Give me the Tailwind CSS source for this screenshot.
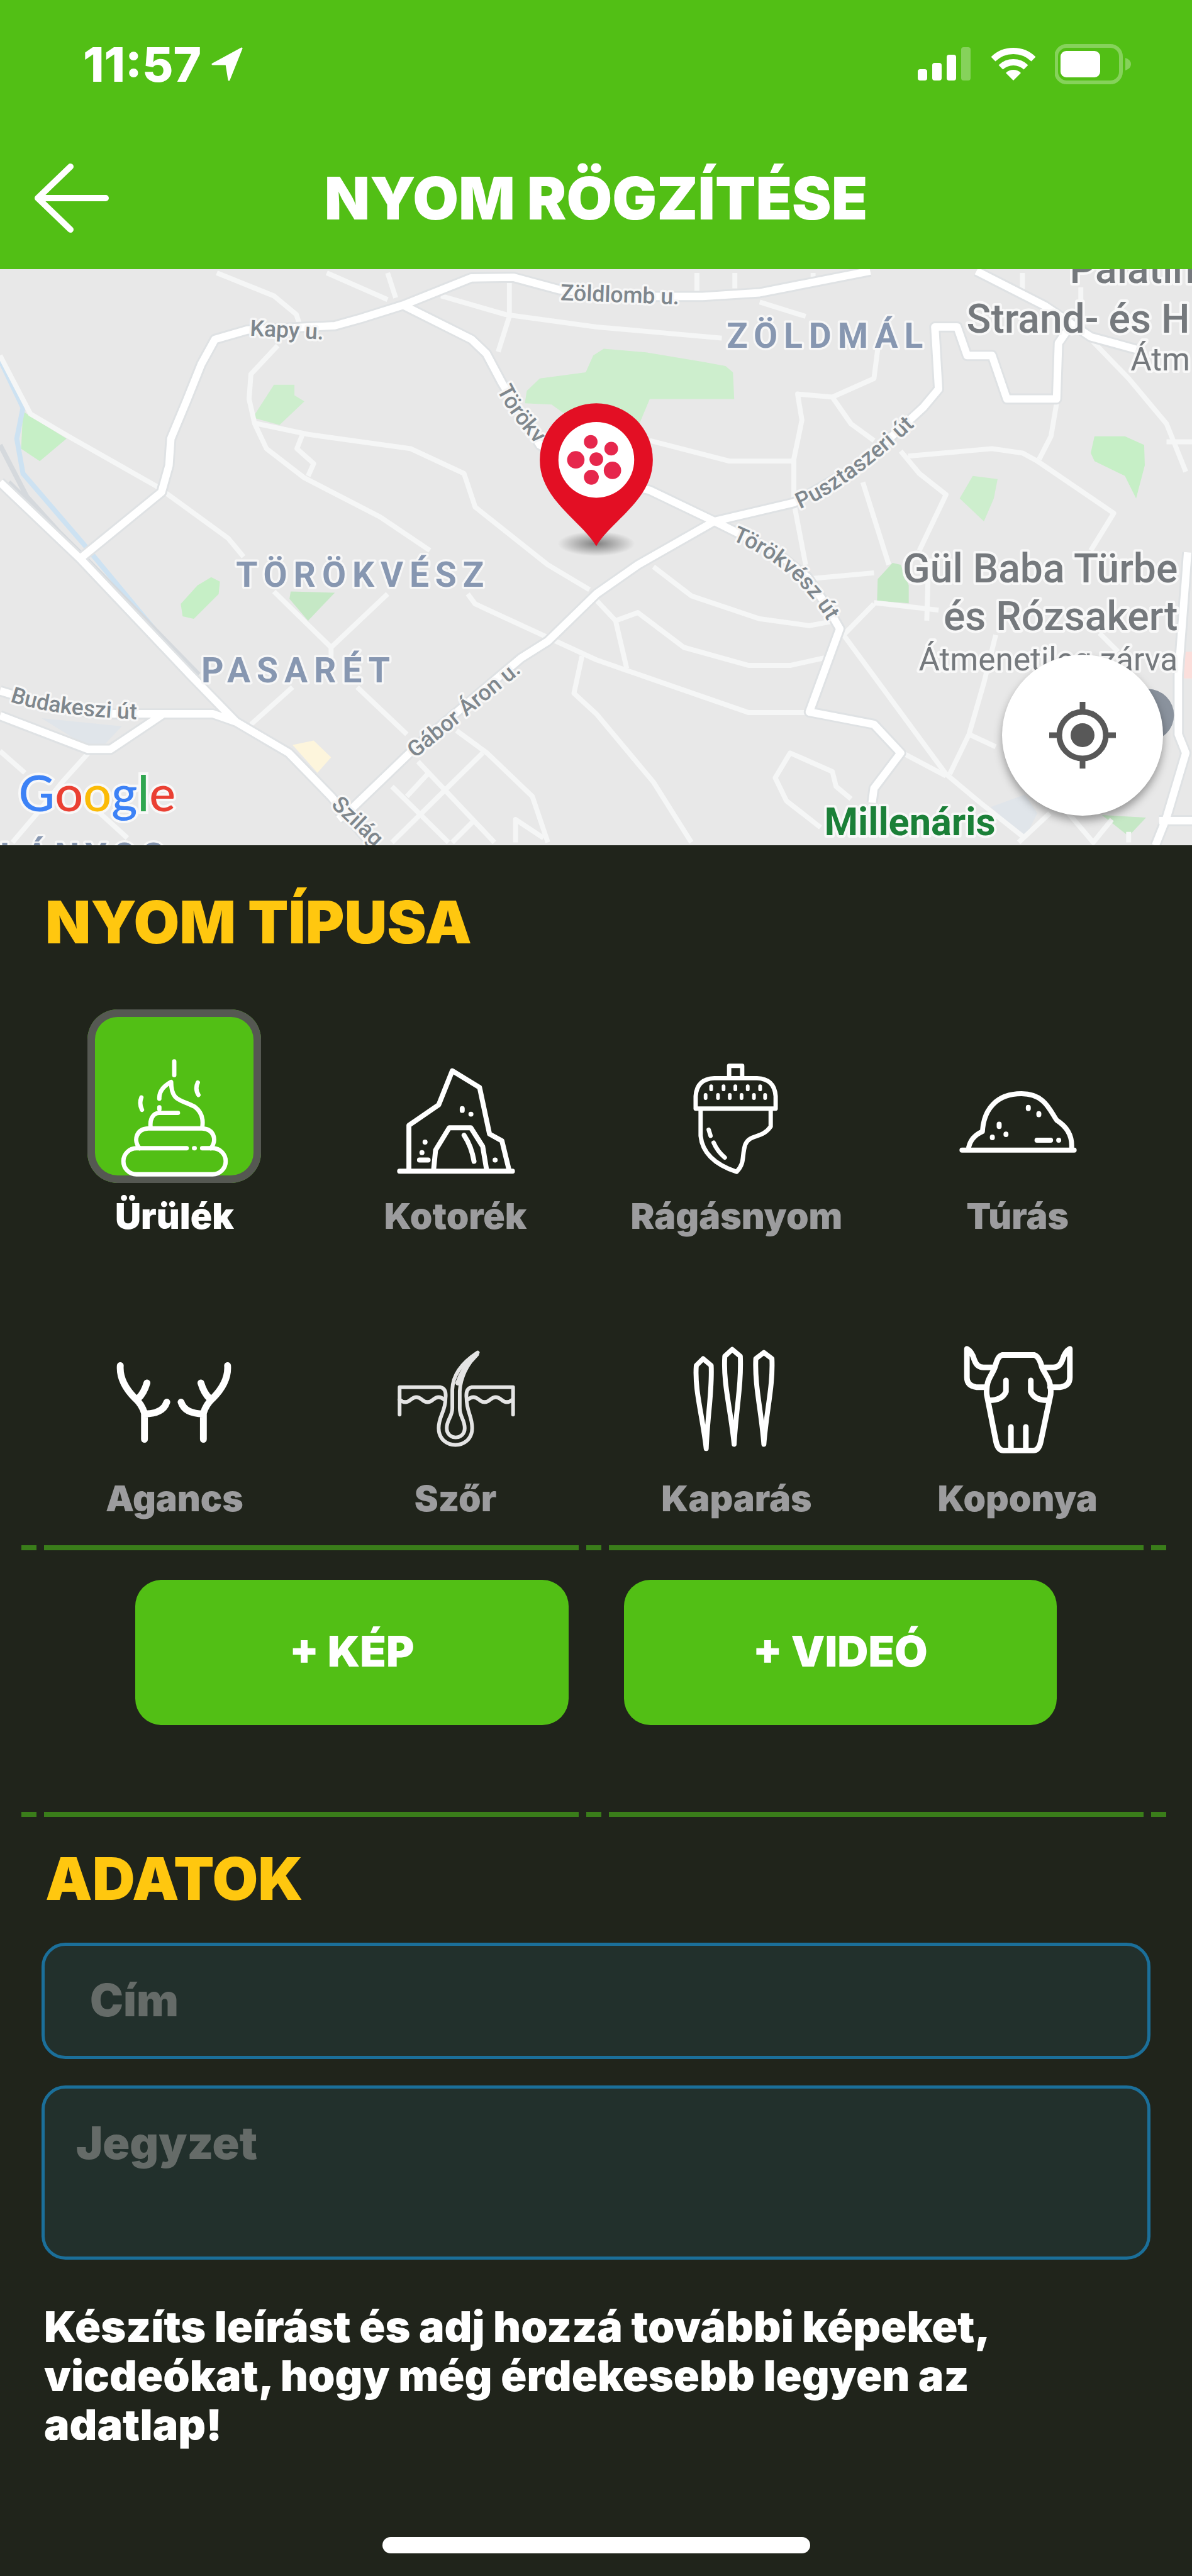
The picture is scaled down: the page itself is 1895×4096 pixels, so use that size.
<!DOCTYPE html>
<html lang="hu">
<head>
  <meta charset="UTF-8" />
  <meta name="viewport" content="width=device-width, initial-scale=1.0" />
  <title>Nyom rögzítése</title>
  <script src="https://cdn.jsdelivr.net/npm/@tailwindcss/browser@4"></script>
</head>
<body class="bg-[#20241b] min-h-screen font-['Inter',sans-serif] text-white">

  <header class="bg-[#52bf15] pt-[62px] pb-[53px]">
    <!-- status bar -->
    <div class="flex items-center justify-between h-20 pl-[132px] pr-[96px]">
      <div class="flex items-center gap-4">
        <span class="text-[76px] leading-20 font-extrabold">11:57</span>
        <svg class="w-[50px] h-[54px]" viewBox="0 0 50 54" fill="#fff" stroke="#fff" stroke-width="3" stroke-linejoin="round"><path d="M48 2 2 27h22l4 25z" /></svg>
      </div>
      <div class="flex items-center gap-[30px]">
        <svg class="w-[86px] h-[56px]" viewBox="0 0 86 56" fill="#fff">
          <rect x="0" y="36" width="15" height="18" rx="4" />
          <rect x="23" y="26" width="15" height="28" rx="4" />
          <rect x="46" y="13" width="15" height="41" rx="4" />
          <rect x="69" y="1" width="15" height="53" rx="4" opacity=".3" />
        </svg>
        <svg class="w-[72px] h-[54px]" viewBox="0 0 72 54" fill="none" stroke="#fff" stroke-width="10">
          <path d="M4 19a46 46 0 0 1 64 0" />
          <path d="M16 32a29 29 0 0 1 40 0" />
          <path d="M36 53 24 41a17 17 0 0 1 24 0z" fill="#fff" stroke="none" />
        </svg>
        <svg class="w-[122px] h-[64px]" viewBox="0 0 122 64">
          <rect x="2" y="3" width="103" height="58" rx="17" fill="none" stroke="#fff" stroke-opacity=".3" stroke-width="6" />
          <rect x="9" y="11" width="63" height="42" rx="9" fill="#fff" />
          <path d="M112 22q9 3 9 10t-9 10z" fill="#fff" fill-opacity=".3" />
        </svg>
      </div>
    </div>
    <!-- title bar -->
    <div class="mt-[113px] grid grid-cols-[180px_1fr_180px] items-center">
      <button type="button" aria-label="Vissza" class="pl-[54px]">
        <svg class="w-[122px] h-[110px]" viewBox="0 0 122 110" fill="none" stroke="#fff" stroke-width="10" stroke-linecap="round" stroke-linejoin="round"><path d="M58 5 6 55l52 50M6 55h108" /></svg>
      </button>
      <h1 class="text-center text-[94px] leading-[120px] font-black">NYOM RÖGZÍTÉSE</h1>
    </div>
  </header>

  <!-- map -->
  <section class="relative">
    <svg class="block w-full" viewBox="0 434 1919 928" font-family="Roboto, sans-serif">
      <defs>
        <path id="main-roads" d="M0 777L129 900 260 793 272 750 275 707 300 647 324 587 346 547 398 532 539 525 582 513 649 492 759 448 826 447 900 467 1000 478H1131L1223 472 1401 437M649 492L759 547 783 570 808 617 869 717 960 770 1046 790 1150 840 1250 890 1300 930 1330 975 1352 1013 1303 1147 1407 1167 1450 1213 1407 1270 1404 1293M1150 840L1278 810 1388 747 1486 657 1511 627 1505 527H1541L1557 573H1597L1621 643H1701L1704 553 1720 530M1572 437L1682 493 1756 543 1829 563M1150 840L1027 910 960 957 882 1033 839 1060 673 1200 569 1300 545 1320M129 900L306 1087 380 1163 465 1213 533 1283 610 1375M0 1113L90 1140 160 1150H343L380 1163M0 1153L141 1207H178L263 1150M1912 890L1897 1087V1183L1909 1213 1878 1317 1860 1362M1866 1322H1919" />
        <path id="p-budakeszi" d="M16 1130Q90 1156 260 1160" />
        <path id="p-torokvesz-1" d="M800 628Q830 690 900 750" />
        <path id="p-torokvesz-2" d="M1178 870C1250 900 1310 950 1345 1025" />
        <path id="p-pusztaszeri" d="M1288 820Q1380 780 1510 650" />
        <path id="p-gabor" d="M668 1222L880 1050" />
        <path id="p-szilagyi" d="M532 1298L640 1400" />
        <radialGradient id="pin-shadow">
          <stop offset="0" stop-color="#000" stop-opacity=".45" />
          <stop offset="1" stop-color="#000" stop-opacity="0" />
        </radialGradient>
      </defs>
      <rect y="434" width="1919" height="928" fill="#e8e8e8" />
      <g fill="#cdeecd">
        <path d="M972 562l68 6 91 15 37 7 12 10 2 43h-136l-25 60-115-38-18-13-43-2 3-20 21-20 74-10 12-27z" />
        <path d="M441 620h33v17l16 10-40 38-43-12z" />
        <path d="M37 663l70 44-43 36-30-20z" fill="#c6efc6" />
        <path d="M340 930l14 7-2 20-40 40-18-4-3-20 27-30z" fill="#c6efc6" />
        <path d="M468 953l71 2-43 45-30-35z" fill="#c5e8c5" />
        <path d="M1437 907l13 3 13 33v29l-51-4 1-35z" fill="#c5e8c5" />
        <path d="M1566 767l40 5-6 31-16 37-39-37z" />
        <path d="M1762 703h49l31 14 1 33-14 53-18-36-49-24-6-13z" fill="#c6efc6" />
        <path d="M1774 1313l71 4-28 30z" fill="#c5e8c5" />
      </g>
      <path d="M471 1200l34-7 28 27-22 25z" fill="#fdf5dc" />
      <path d="M67 1157l129 13-31 33h-24z" fill="#e0e5ea" />
      <path d="M1595 1300l55-20 20 30-20 40z" fill="#e0e5ea" />
      <rect x="1903" y="1050" width="16" height="43" fill="#fbdedb" />
      <path d="M0 580L37 657 27 707 37 763 135 877 251 1017" fill="none" stroke="#cde2f2" stroke-width="8" />
      <path d="M0 717L43 800 122 887M14 777L138 900 320 1087" fill="none" stroke="#d5d9dd" stroke-width="8" />
      <!-- side streets -->
      <g fill="none" stroke="#f5f6f6" stroke-width="8" stroke-linejoin="round">
        <path d="M0 573L49 667 110 703 251 783 275 800 367 867 392 897" />
        <path d="M349 440L441 477 477 507 483 525M526 440L624 483M624 440L637 480" />
        <path d="M820 447V510L802 567M710 477L814 507 960 527 1162 545" />
        <path d="M447 557L404 603 401 643 410 683 429 723 490 770 612 833 692 887" />
        <path d="M410 682L496 700 661 723 747 763 765 817 882 910 949 950M487 700L478 723 505 747 496 767" />
        <path d="M441 953L533 1043 624 957M753 957L765 973 882 1027 960 1063 1009 1080 1205 1148H1297" />
        <path d="M533 1043V1070M471 1107L404 1167M575 1107L655 1183M735 1177L784 1213 857 1283 882 1357" />
        <path d="M777 1213L631 1357M673 1227L796 1357M631 1267L722 1357M692 1243L655 1283M765 1320L728 1357M830 1357V1320L875 1350" />
        <path d="M937 1057L924 1117 960 1150 1052 1260 1113 1357" />
        <path d="M1052 913L1113 960 1223 997 1303 1008 1345 1000M960 967L991 1000 1009 1077M991 1000L1027 987 1101 1043 1205 1072H1272L1327 1060" />
        <path d="M1407 973L1358 1023 1523 1247 1578 1293 1646 1347M1309 932L1407 923M1407 971L1511 983" />
        <path d="M1603 1023L1584 1100 1560 1183 1529 1247M1560 1183L1603 1203M1455 1214L1523 1250" />
        <path d="M1321 1333L1266 1290 1248 1253 1272 1213 1340 1243 1346 1267 1370 1287" />
        <path d="M1413 563L1407 610 1340 640 1284 635 1291 677 1278 740V810L1297 910M1340 640L1370 683 1407 710" />
        <path d="M1046 710L1174 743H1278M1389 777L1431 910M1450 727L1480 763 1523 797 1480 887" />
        <path d="M1462 735L1597 723 1646 730 1670 743 1793 827 1756 887M1701 650L1692 703 1673 740" />
        <path d="M1756 547L1817 610 1878 683 1909 760M1122 440V470M1183 440V465M1309 440V455M1646 440V475M1740 463V490M1223 487L1297 510" />
        <path d="M0 1210L40 1245M145 1210L100 1260 60 1310 20 1357M150 1300L205 1350M1878 712H1919M1495 900L1492 1000M1770 1020L1800 1050" />
        <path d="M1690 1310L1640 1357M1720 1310L1760 1357 1790 1320M1817 1340V1357" />
      </g>
      <!-- main roads: casing first, white on top -->
      <g fill="none" stroke-linejoin="round">
        <use href="#main-roads" stroke="#dfe2e4" stroke-width="18" />
        <use href="#main-roads" stroke="#fff" stroke-width="12" />
      </g>
      <circle cx="1848" cy="1152" r="42" fill="#8a929d" />
      <!-- street names -->
      <g font-size="36" font-weight="500" fill="#7f878d" stroke="#f7f7f7" stroke-width="7" stroke-linejoin="round" paint-order="stroke">
        <text x="902" y="484" transform="rotate(2 902 484)">Zöldlomb u.</text>
        <text x="402" y="541" transform="rotate(3 402 541)">Kapy u.</text>
        <text><textPath href="#p-budakeszi">Budakeszi út</textPath></text>
        <text><textPath href="#p-torokvesz-1">Törökv</textPath></text>
        <text><textPath href="#p-torokvesz-2">Törökvész út</textPath></text>
        <text><textPath href="#p-pusztaszeri">Pusztaszeri út</textPath></text>
        <text><textPath href="#p-gabor">Gábor Áron u.</textPath></text>
        <text><textPath href="#p-szilagyi">Szilág</textPath></text>
      </g>
      <!-- districts -->
      <g class="tracking-[10px]" font-size="56" font-weight="700" fill="#8797b1" stroke="#f7f7f7" stroke-width="7" stroke-linejoin="round" paint-order="stroke">
        <text x="1170" y="561">ZÖLDMÁL</text>
        <text x="380" y="945">TÖRÖKVÉSZ</text>
        <text x="324" y="1099">PASARÉT</text>
        <text x="0" y="1398">LÁNYOS</text>
      </g>
      <!-- places -->
      <g fill="#75797d" stroke="#f8f8f8" stroke-width="8" stroke-linejoin="round" paint-order="stroke">
        <g font-size="65" font-weight="500">
          <text x="1722" y="456">Palatin</text>
          <text x="1556" y="536">Strand- és H</text>
          <text x="1896" y="938" text-anchor="end">Gül Baba Türbe</text>
          <text x="1896" y="1015" text-anchor="end">és Rózsakert</text>
        </g>
        <g font-size="52">
          <text x="1820" y="597">Átm</text>
          <text x="1896" y="1080" text-anchor="end">Átmenetileg zárva</text>
        </g>
        <text x="1327" y="1345" font-size="62" font-weight="700" fill="#1b8038">Millenáris</text>
      </g>
      <text x="30" y="1307" font-family="Lato, sans-serif" font-size="80" font-weight="500" stroke="#f8f8f8" stroke-width="8" paint-order="stroke"><tspan fill="#3d82f6">G</tspan><tspan fill="#ea4033">o</tspan><tspan fill="#fbbb07">o</tspan><tspan fill="#3d82f6">g</tspan><tspan fill="#30a650">l</tspan><tspan fill="#ea4033">e</tspan></text>
      <!-- pin -->
      <ellipse cx="960" cy="876" rx="62" ry="20" fill="url(#pin-shadow)" />
      <path d="M960 880C935 838 869 805 869 741a91 91 0 0 1 182 0C1051 805 985 838 960 880z" fill="#e30f24" />
      <circle cx="960" cy="741" r="61" fill="#fff" />
      <g fill="#e6274c">
        <circle cx="951" cy="712" r="11" /><circle cx="927" cy="741" r="14" /><circle cx="960" cy="740" r="11" />
        <circle cx="984" cy="723" r="11" /><circle cx="986" cy="758" r="14" /><circle cx="952" cy="769" r="12" />
      </g>
    </svg>
    <button type="button" aria-label="Saját helyzet" class="absolute right-[46px] bottom-[47px] size-[256px] rounded-full bg-white shadow-[0_8px_14px_rgba(0,0,0,0.35)] flex items-center justify-center">
      <svg class="size-[108px]" viewBox="0 0 108 108" fill="none" stroke="#585858" stroke-width="9">
        <circle cx="54" cy="54" r="37" /><circle cx="54" cy="54" r="19" fill="#585858" stroke="none" />
        <path d="M54 1v16M54 91v16M1 54h16M91 54h16" />
      </svg>
    </button>
  </section>

  <main class="pt-[66px]">
    <h2 class="pl-[72px] text-[94px] leading-[112px] font-black text-[#ffc70f]">NYOM TÍPUSA</h2>

    <div class="mt-[83px] px-[54px] grid grid-cols-4 gap-y-[84px] text-[57px] leading-[72px] font-black text-[#9c9c9e]">
      <button type="button" aria-pressed="true" class="flex flex-col items-center gap-[17px] text-white">
        <span class="size-[276px] rounded-[48px] bg-[#52bf15] inset-ring-[12px] inset-ring-[#555852]">
          <svg viewBox="0 0 280 280" fill="none" stroke="#fff" stroke-width="7" stroke-linecap="round" stroke-linejoin="round">
            <path d="M160 224H79a21 21 0 0 0 0 42h123a21 21 0 0 0 0-42h-17M172 224h1" />
            <path d="M84 224C74 212 78 193 98 192h87c20 1 24 20 14 32" />
            <path d="M102 191c-2-14 4-24 14-24h30M116 161v-3M116 144q-1-16 19-27c0 32 16 28 38 40q16 12 12 34" />
            <path d="M140 84v22M178 118q-5 10 1 20M87 142q-4 10 1 20" />
          </svg>
        </span>
        Ürülék
      </button>
      <button type="button" aria-pressed="false" class="flex flex-col items-center gap-[17px]">
        <span class="size-[276px]">
          <svg viewBox="0 0 280 280" fill="none" stroke="#fff" stroke-width="8" stroke-linecap="round" stroke-linejoin="round">
            <path d="M50 261h182M65 257v-70l48-33 22-55 44 27 16 75 20 11 11 45" />
            <path d="M105 257l3-30 22-36h35l19 30 6 36M154 203q12 18 16 42" />
            <path d="M151 160v3M165 169h.1M91 214h.1M86 231h.1M82 243h14M204 243h.1" />
          </svg>
        </span>
        Kotorék
      </button>
      <button type="button" aria-pressed="false" class="flex flex-col items-center gap-[17px]">
        <span class="size-[276px]">
          <svg viewBox="0 0 280 280" fill="none" stroke="#fff" stroke-width="7" stroke-linecap="round" stroke-linejoin="round">
            <path d="M128 111V91h21v20M74 160v-20q2-28 30-29h69q28 1 30 29v20zM82 161v43q4 40 58 58c14-14 8-26 14-44 8-18 26-8 41-29v-28" />
            <path d="M95 194l3 10M103 215q6 14 18 24" />
            <path stroke-width="6" d="M99 124v5M119 124v5M138 124v5M158 124v5M178 124v5M90 138v5M110 138v5M129 138v5M148 138v5M168 138v5M186 138v5" />
          </svg>
        </span>
        Rágásnyom
      </button>
      <button type="button" aria-pressed="false" class="flex flex-col items-center gap-[17px]">
        <span class="size-[276px]">
          <svg viewBox="0 0 280 280" fill="none" stroke="#fff" stroke-width="8" stroke-linecap="round" stroke-linejoin="round">
            <path d="M50 227h181M61 222q4-17 22-25c2-35 22-61 63-61 38 0 46 28 57 43q25 16 24 43" />
            <path d="M110 185v4M121 201v1M99 206v1M157 158v2M174 168v2M171 211h22M206 211h.1" />
          </svg>
        </span>
        Túrás
      </button>
      <button type="button" aria-pressed="false" class="flex flex-col items-center gap-[17px]">
        <span class="size-[276px]">
          <svg viewBox="0 0 280 280" fill="none" stroke="#fff" stroke-width="11" stroke-linecap="round" stroke-linejoin="round">
            <path d="M92 238v-42q-4-14-15-24-26-26-24-53M82 172q9-8 14-25M92 197q30 0 36-19" />
            <path d="M187 238v-42q4-14 15-24 26-26 24-53M197 172q-9-8-14-25M187 197q-30 0-36-19" />
          </svg>
        </span>
        Agancs
      </button>
      <button type="button" aria-pressed="false" class="flex flex-col items-center gap-[17px]">
        <span class="size-[276px]">
          <svg viewBox="0 0 280 280" fill="none" stroke="#e4e4e4" stroke-width="6" stroke-linecap="round" stroke-linejoin="round">
            <path d="M50 198v-44h66q10 2 8 18c0 22-11 28-11 48 0 36 54 36 54 0 0-20-9-26-9-48q-2-16 8-18h67v44" />
            <path d="M50 174q9 8 18 0t18 0 18 0 18 0M160 174q9-8 18 0t18 0 18 0 18 0" />
            <path d="M176 98q-40 26-41 60v30c0 14-9 18-9 32 0 20 29 20 29 0 0-14-8-18-8-32v-28q2-32 29-62z" />
            <path d="M174 101q-22 22-30 46" stroke-width="8" />
          </svg>
        </span>
        Szőr
      </button>
      <button type="button" aria-pressed="false" class="flex flex-col items-center gap-[17px]">
        <span class="size-[276px]">
          <svg viewBox="0 0 280 280" fill="none" stroke="#fff" stroke-width="8" stroke-linejoin="round">
            <path d="M86 108l-11 11c-3 40 10 80 16 134 2-54 10-94 8-134zM133 93l-12 11c-3 44 10 88 15 142 3-54 12-98 10-142zM184 98l-13 10c-2 44 9 84 13 138 4-54 15-94 13-138z" />
          </svg>
        </span>
        Kaparás
      </button>
      <button type="button" aria-pressed="false" class="flex flex-col items-center gap-[17px]">
        <span class="size-[276px]">
          <svg viewBox="0 0 280 280" fill="none" stroke="#fff" stroke-width="9" stroke-linecap="round" stroke-linejoin="round">
            <path d="M115 102h52q8 3 12 20c6 14 16 20 14 44l-16 76q-3 14-12 14h-48q-9 0-12-14L90 166c-2-24 8-30 13-44 4-14 6-18 12-20z" />
            <path d="M90 154H74q-16-2-16-16V92q8 4 12 18 4 12 15 12h14M192 154h16q16-2 16-16V92q-8 4-12 18-4 12-15 12h-14" />
            <path d="M121 143v18q-6 14-27 14M161 143v18q6 14 27 14M129 218v34M153 218v34" />
          </svg>
        </span>
        Koponya
      </button>
    </div>

    <div class="mt-[38px] pl-[34px] pr-[41px] h-2 flex gap-3">
      <span class="w-6 bg-[#3a7d1a]"></span><span class="flex-1 bg-[#3a7d1a]"></span><span class="w-6 bg-[#3a7d1a]"></span><span class="flex-1 bg-[#3a7d1a]"></span><span class="w-6 bg-[#3a7d1a]"></span>
    </div>

    <div class="mt-[47px] px-[215px] grid grid-cols-2 gap-[88px] text-[68px] leading-[80px] font-black">
      <button type="button" class="rounded-[42px] bg-[#52bf15] pt-[73px] pb-[78px]">+ KÉP</button>
      <button type="button" class="rounded-[42px] bg-[#52bf15] pt-[73px] pb-[78px]">+ VIDEÓ</button>
    </div>

    <div class="mt-[138px] pl-[34px] pr-[41px] h-2 flex gap-3">
      <span class="w-6 bg-[#3a7d1a]"></span><span class="flex-1 bg-[#3a7d1a]"></span><span class="w-6 bg-[#3a7d1a]"></span><span class="flex-1 bg-[#3a7d1a]"></span><span class="w-6 bg-[#3a7d1a]"></span>
    </div>

    <h2 class="mt-[42px] pl-[72px] text-[94px] leading-[112px] font-black text-[#ffc70f]">ADATOK</h2>

    <form class="mt-[46px] px-[66px] flex flex-col gap-[42px] text-[71px] leading-[80px] font-black">
      <input type="text" aria-label="Cím" placeholder="Cím" class="w-full h-[185px] px-[72px] pb-[4px] rounded-[38px] border-[5px] border-[#1b6f9a] bg-[#22302c] placeholder:text-[#656b68]" />
      <textarea aria-label="Jegyzet" placeholder="Jegyzet" class="w-full h-[277px] px-[50px] pt-[46px] rounded-[38px] border-[5px] border-[#1b6f9a] bg-[#22302c] placeholder:text-[#656b68] resize-none"></textarea>
    </form>

    <p class="mt-[67px] pl-[70px] pr-[260px] text-[68px] leading-[78px] font-black">Készíts leírást és adj hozzá további képeket, vicdeókat, hogy még érdekesebb legyen az adatlap!</p>

    <div class="pt-[140px] pb-[36px]">
      <div class="mx-auto w-[680px] h-[26px] rounded-full bg-white"></div>
    </div>
  </main>

</body>
</html>
